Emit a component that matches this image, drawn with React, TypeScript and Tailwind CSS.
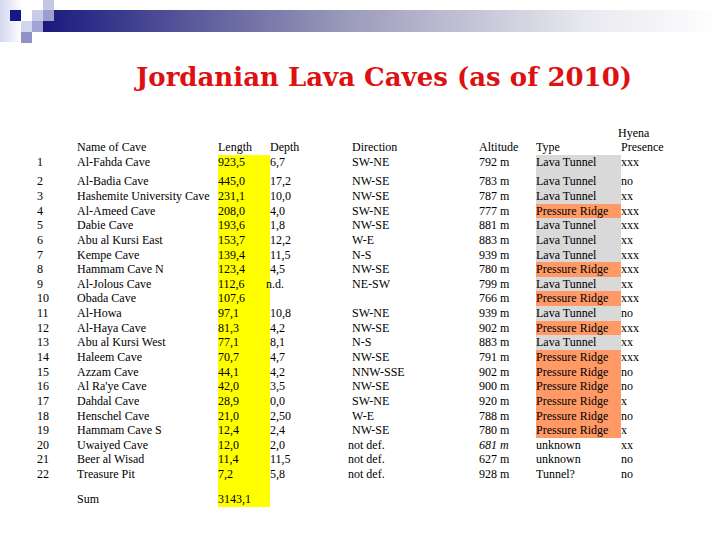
import React from 'react'

type Cave = {
  no: string
  name: string
  length: string
  depth: string
  direction: string
  altitude: string
  type: string
  hyena: string
  shiftDepth?: boolean
  italicAlt?: boolean
}

const caves: Cave[] = [
  { no: '1', name: 'Al-Fahda Cave', length: '923,5', depth: '6,7', direction: 'SW-NE', altitude: '792 m', type: 'Lava Tunnel', hyena: 'xxx' },
  { no: '2', name: 'Al-Badia Cave', length: '445,0', depth: '17,2', direction: 'NW-SE', altitude: '783 m', type: 'Lava Tunnel', hyena: 'no' },
  { no: '3', name: 'Hashemite University Cave', length: '231,1', depth: '10,0', direction: 'NW-SE', altitude: '787 m', type: 'Lava Tunnel', hyena: 'xx' },
  { no: '4', name: 'Al-Ameed Cave', length: '208,0', depth: '4,0', direction: 'SW-NE', altitude: '777 m', type: 'Pressure Ridge', hyena: 'xxx' },
  { no: '5', name: 'Dabie Cave', length: '193,6', depth: '1,8', direction: 'NW-SE', altitude: '881 m', type: 'Lava Tunnel', hyena: 'xxx' },
  { no: '6', name: 'Abu al Kursi East', length: '153,7', depth: '12,2', direction: 'W-E', altitude: '883 m', type: 'Lava Tunnel', hyena: 'xx' },
  { no: '7', name: 'Kempe Cave', length: '139,4', depth: '11,5', direction: 'N-S', altitude: '939 m', type: 'Lava Tunnel', hyena: 'xxx' },
  { no: '8', name: 'Hammam Cave N', length: '123,4', depth: '4,5', direction: 'NW-SE', altitude: '780 m', type: 'Pressure Ridge', hyena: 'xxx' },
  { no: '9', name: 'Al-Jolous Cave', length: '112,6', depth: 'n.d.', direction: 'NE-SW', altitude: '799 m', type: 'Lava Tunnel', hyena: 'xx', shiftDepth: true },
  { no: '10', name: 'Obada Cave', length: '107,6', depth: '', direction: '', altitude: '766 m', type: 'Pressure Ridge', hyena: 'xxx' },
  { no: '11', name: 'Al-Howa', length: '97,1', depth: '10,8', direction: 'SW-NE', altitude: '939 m', type: 'Lava Tunnel', hyena: 'no' },
  { no: '12', name: 'Al-Haya Cave', length: '81,3', depth: '4,2', direction: 'NW-SE', altitude: '902 m', type: 'Pressure Ridge', hyena: 'xxx' },
  { no: '13', name: 'Abu al Kursi West', length: '77,1', depth: '8,1', direction: 'N-S', altitude: '883 m', type: 'Lava Tunnel', hyena: 'xx' },
  { no: '14', name: 'Haleem Cave', length: '70,7', depth: '4,7', direction: 'NW-SE', altitude: '791 m', type: 'Pressure Ridge', hyena: 'xxx' },
  { no: '15', name: 'Azzam Cave', length: '44,1', depth: '4,2', direction: 'NNW-SSE', altitude: '902 m', type: 'Pressure Ridge', hyena: 'no' },
  { no: '16', name: "Al Ra'ye Cave", length: '42,0', depth: '3,5', direction: 'NW-SE', altitude: '900 m', type: 'Pressure Ridge', hyena: 'no' },
  { no: '17', name: 'Dahdal Cave', length: '28,9', depth: '0,0', direction: 'SW-NE', altitude: '920 m', type: 'Pressure Ridge', hyena: 'x' },
  { no: '18', name: 'Henschel Cave', length: '21,0', depth: '2,50', direction: 'W-E', altitude: '788 m', type: 'Pressure Ridge', hyena: 'no' },
  { no: '19', name: 'Hammam Cave S', length: '12,4', depth: '2,4', direction: 'NW-SE', altitude: '780 m', type: 'Pressure Ridge', hyena: 'x' },
  { no: '20', name: 'Uwaiyed Cave', length: '12,0', depth: '2,0', direction: 'not def.', altitude: '681 m', type: 'unknown', hyena: 'xx', italicAlt: true },
  { no: '21', name: 'Beer al Wisad', length: '11,4', depth: '11,5', direction: 'not def.', altitude: '627 m', type: 'unknown', hyena: 'no' },
  { no: '22', name: 'Treasure Pit', length: '7,2', depth: '5,8', direction: 'not def.', altitude: '928 m', type: 'Tunnel?', hyena: 'no' },
]

const cols = 'grid grid-cols-[40px_141px_52px_82px_127px_57px_85px_1fr] h-[14.65px] leading-[14.65px]'

const typeBg = (c: Cave, idx: number) => {
  if (idx > 18) return ''
  return c.type === 'Pressure Ridge' ? 'bg-[#ff9966]' : 'bg-[#d9d9d9]'
}

const Banner = () => (
  <svg width="720" height="44" viewBox="0 0 720 44" className="block">
    <defs>
      <linearGradient id="bar" x1="0" x2="1" y1="0" y2="0">
        <stop offset="0" stopColor="#1a1a7e" />
        <stop offset="0.45" stopColor="#9b9bbb" />
        <stop offset="0.8" stopColor="#e8e8ef" />
        <stop offset="1" stopColor="#ffffff" />
      </linearGradient>
      <linearGradient id="side" x1="0" x2="1" y1="0" y2="0">
        <stop offset="0" stopColor="#d4d7ee" />
        <stop offset="1" stopColor="#ffffff" />
      </linearGradient>
    </defs>
    <rect x="0" y="0" width="22" height="42" fill="url(#side)" />
    <rect x="43" y="10" width="677" height="22" fill="url(#bar)" />
    <rect x="10" y="10" width="11" height="11" fill="#16168a" />
    <rect x="32" y="10" width="11" height="11" fill="#c9cce8" />
    <rect x="43" y="0" width="11" height="10" fill="#c4c7e3" />
    <rect x="43" y="10" width="11" height="11" fill="#9c9fd0" />
    <rect x="21" y="21" width="11" height="11" fill="#d2d5ee" />
    <rect x="32" y="21" width="11" height="11" fill="#a2a5d3" />
    <rect x="21" y="32" width="11" height="11" fill="#9092c6" />
  </svg>
)

const CaveRow = ({ c, idx }: { c: Cave; idx: number }) => (
  <div className={cols}>
    <div>{c.no}</div>
    <div className="whitespace-nowrap">{c.name}</div>
    <div className="bg-[#ffff00]">{c.length}</div>
    <div className={c.shiftDepth ? '-ml-[4px]' : ''}>{c.depth}</div>
    <div className={c.direction === 'not def.' ? '-ml-[4px] whitespace-nowrap' : 'whitespace-nowrap'}>{c.direction}</div>
    <div className={c.italicAlt ? 'italic whitespace-nowrap' : 'whitespace-nowrap'}>{c.altitude}</div>
    <div className={`whitespace-nowrap ${typeBg(c, idx)}`}>{c.type}</div>
    <div>{c.hyena}</div>
  </div>
)

export default function App() {
  return (
    <div className="w-[720px] h-[540px] bg-white overflow-hidden text-black">
      <Banner />
      <div className="h-[66px] flex items-center pl-[136px]">
        <h1 className="text-[26px] font-bold text-[#dd1111] whitespace-nowrap" style={{ fontFamily: '"DejaVu Serif", serif' }}>
          Jordanian Lava Caves (as of 2010)
        </h1>
      </div>
      <div className="mt-[15.7px] pl-[37px] text-[12px]" style={{ fontFamily: '"Liberation Serif", "Times New Roman", serif' }}>
        <div className={cols}>
          <div /><div /><div /><div /><div /><div /><div />
          <div className="-ml-[3px]">Hyena</div>
        </div>
        <div className={cols}>
          <div />
          <div>Name of Cave</div>
          <div>Length</div>
          <div>Depth</div>
          <div>Direction</div>
          <div>Altitude</div>
          <div>Type</div>
          <div>Presence</div>
        </div>
        <CaveRow c={caves[0]} idx={0} />
        <div className="grid grid-cols-[40px_141px_52px_82px_127px_57px_85px_1fr] h-[4.7px]">
          <div /><div /><div className="bg-[#ffff00]" /><div /><div /><div /><div className="bg-[#d9d9d9]" /><div />
        </div>
        {caves.slice(1).map((c, i) => (
          <CaveRow key={c.no} c={c} idx={i + 1} />
        ))}
        <div className="grid grid-cols-[40px_141px_52px_82px_127px_57px_85px_1fr] h-[10.4px]">
          <div /><div /><div className="bg-[#ffff00]" /><div />
        </div>
        <div className={cols}>
          <div />
          <div>Sum</div>
          <div className="bg-[#ffff00]">3143,1</div>
          <div />
        </div>
      </div>
    </div>
  )
}
